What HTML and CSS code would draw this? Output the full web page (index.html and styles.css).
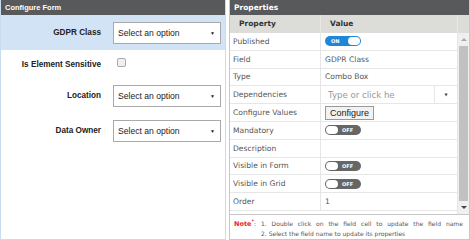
FILE: index.html
```html
<!DOCTYPE html>
<html lang="en">
<head>
    <meta charset="UTF-8">
    <title>Configure Form</title>
    <link rel="stylesheet" href="styles.css">
</head>
<body>
    <div class="layout">
        <div class="panel form-panel">
            <div class="panel-header">Configure Form</div>
            <div class="form-body">
                <div class="form-row active">
                    <label class="form-label">GDPR Class</label>
                    <div class="select-box">Select an option <span class="caret">&#9660;</span></div>
                </div>
                <div class="form-row check-row">
                    <label class="form-label">Is Element Sensitive</label>
                    <span class="checkbox"></span>
                </div>
                <div class="form-row">
                    <label class="form-label">Location</label>
                    <div class="select-box">Select an option <span class="caret">&#9660;</span></div>
                </div>
                <div class="form-row">
                    <label class="form-label">Data Owner</label>
                    <div class="select-box">Select an option <span class="caret">&#9660;</span></div>
                </div>
            </div>
        </div>

        <div class="panel props-panel">
            <div class="panel-header">Properties</div>
            <div class="grid-head">
                <div class="col-prop">Property</div>
                <div class="col-val">Value</div>
                <div class="col-bar"></div>
            </div>
            <div class="grid-body">
                <div class="rows">
                    <div class="row"><div class="col-prop">Published</div><div class="col-val"><span class="toggle on"><span class="toggle-text">ON</span><span class="knob"></span></span></div></div>
                    <div class="row"><div class="col-prop">Field</div><div class="col-val">GDPR Class</div></div>
                    <div class="row"><div class="col-prop">Type</div><div class="col-val">Combo Box</div></div>
                    <div class="row"><div class="col-prop">Dependencies</div><div class="col-val dep"><span class="dep-input">Type or click he</span><span class="dep-arrow">&#9660;</span></div></div>
                    <div class="row"><div class="col-prop">Configure Values</div><div class="col-val"><button class="btn">Configure</button></div></div>
                    <div class="row"><div class="col-prop">Mandatory</div><div class="col-val"><span class="toggle off"><span class="knob"></span><span class="toggle-text">OFF</span></span></div></div>
                    <div class="row"><div class="col-prop">Description</div><div class="col-val"></div></div>
                    <div class="row"><div class="col-prop">Visible in Form</div><div class="col-val"><span class="toggle off"><span class="knob"></span><span class="toggle-text">OFF</span></span></div></div>
                    <div class="row"><div class="col-prop">Visible in Grid</div><div class="col-val"><span class="toggle off"><span class="knob"></span><span class="toggle-text">OFF</span></span></div></div>
                    <div class="row"><div class="col-prop">Order</div><div class="col-val">1</div></div>
                </div>
                <div class="scrollbar">
                    <span class="arrow up"></span>
                    <span class="thumb"></span>
                    <span class="arrow down"></span>
                </div>
            </div>
            <div class="note">
                <div class="note-first"><span class="note-label">Note<sup>*</sup></span>: 1. Double click on the field cell to update the field name</div>
                <div class="note-second">2. Select the field name to update its properties</div>
            </div>
        </div>
    </div>
</body>
</html>
```

FILE: styles.css
```css
body {
    margin: 0;
    padding: 0;
    background-color: #fff;
    font-family: "Liberation Sans", Arial, sans-serif;
}

.layout {
    display: flex;
    gap: 3px;
    width: 470px;
    height: 240px;
}

.panel {
    display: flex;
    flex-direction: column;
    box-sizing: border-box;
    height: 240px;
}

.panel-header {
    height: 15px;
    line-height: 15px;
    background-color: #58595b;
    color: #fff;
    font-size: 7.5px;
    font-weight: bold;
    padding-left: 4px;
    flex-shrink: 0;
}

/* left form */
.form-panel {
    width: 226px;
    border-left: 1px solid #c9dbef;
    border-right: 1px solid #c9dbef;
    border-bottom: 1px solid #c9dbef;
}

.form-body {
    flex: 1;
}

.form-row {
    display: flex;
    align-items: center;
    height: 35px;
}

.form-row.active {
    background-color: #d3e3f6;
}

.form-row.check-row {
    height: 28px;
}

.form-label {
    width: 101px;
    flex-shrink: 0;
    text-align: right;
    white-space: nowrap;
    font-size: 8.2px;
    font-weight: bold;
    color: #222;
    margin-right: 12px;
    margin-left: -1px;
}

.select-box {
    position: relative;
    width: 108px;
    height: 22px;
    box-sizing: border-box;
    border: 1px solid #aaa;
    background-color: #fff;
    font-size: 8.6px;
    line-height: 21px;
    padding-left: 4px;
    color: #222;
}

.caret {
    position: absolute;
    right: 5px;
    top: 0;
    font-size: 5px;
}

.checkbox {
    display: inline-block;
    width: 7px;
    height: 7px;
    border: 1px solid #aaa;
    border-radius: 2px;
    background-color: #f0f0f0;
    margin-left: 4px;
    margin-top: -4px;
}

/* right properties */
.props-panel {
    flex: 1;
    border: 1px solid #c8c8c8;
    border-top: none;
    font-family: "DejaVu Sans", sans-serif;
}

.grid-head {
    display: flex;
    height: 18px;
    line-height: 18px;
    background-color: #dcdcd8;
    font-size: 7.5px;
    font-weight: bold;
    color: #333;
    flex-shrink: 0;
}

.grid-head .col-prop {
    padding-left: 9px;
}

.grid-head .col-val {
    padding-left: 9px;
    border-left: 1px solid #e8e8e4;
}

.grid-head .col-bar {
    flex: 1;
    border-left: 1px solid #e8e8e4;
}

.col-prop {
    width: 90px;
    box-sizing: border-box;
    padding-left: 3px;
}

.col-val {
    width: 137px;
    box-sizing: border-box;
    padding-left: 4px;
    border-left: 1px solid #e6e6e6;
}

.grid-body {
    display: flex;
    height: 181px;
    overflow: hidden;
    flex-shrink: 0;
}

.rows {
    width: 227px;
}

.row {
    display: flex;
    height: 17.8px;
    border-bottom: 1px solid #e6e6e6;
    box-sizing: border-box;
    font-size: 7.6px;
    color: #555;
}

.row > div {
    display: flex;
    align-items: center;
    white-space: nowrap;
}

.toggle {
    display: inline-flex;
    align-items: center;
    width: 36px;
    height: 10px;
    border-radius: 6px;
    box-sizing: border-box;
    font-size: 5px;
    font-weight: bold;
    color: #fff;
}

.toggle.on {
    background-color: #1e88d8;
    justify-content: space-between;
    padding-left: 6px;
    padding-right: 1px;
}

.toggle.off {
    background-color: #666;
    padding-left: 1px;
    gap: 4px;
}

.knob {
    width: 12px;
    height: 8px;
    border-radius: 5px;
    background-color: #fff;
}

.dep {
    position: relative;
}

.dep-input {
    color: #999;
    font-size: 8.6px;
    padding-left: 3px;
}

.dep-arrow {
    position: absolute;
    right: 0;
    top: 0;
    bottom: 0;
    width: 22px;
    border-left: 1px solid #e6e6e6;
    font-size: 4px;
    color: #444;
    display: flex;
    align-items: center;
    justify-content: center;
}

.btn {
    font-family: "Liberation Sans", Arial, sans-serif;
    font-size: 9px;
    padding: 0 4px;
    height: 14px;
    border: 1px solid #999;
    background-color: #f2f2f2;
    color: #222;
    margin: 0;
}

.scrollbar {
    flex: 1;
    display: flex;
    flex-direction: column;
    align-items: center;
    background-color: #f0f0f0;
    border-left: 1px solid #e6e6e6;
}

.arrow {
    width: 0;
    height: 0;
    border-left: 3px solid transparent;
    border-right: 3px solid transparent;
    margin: 5px 0;
}

.arrow.up {
    border-bottom: 3px solid #aaa;
}

.arrow.down {
    border-top: 3px solid #444;
}

.thumb {
    width: 9px;
    flex: 1;
    background-color: #c1c1c1;
}

.note {
    border-top: 1px solid #c8c8c8;
    font-size: 6px;
    color: #555;
    padding: 4px 0 0 4px;
    line-height: 10px;
}

.note-first {
    word-spacing: 3px;
    white-space: nowrap;
}

.note-label {
    color: #e8262a;
    font-weight: bold;
    font-size: 6.5px;
    word-spacing: 0;
}

.note-label sup {
    font-size: 5px;
    line-height: 0;
}

.note-second {
    padding-left: 27px;
}
```
